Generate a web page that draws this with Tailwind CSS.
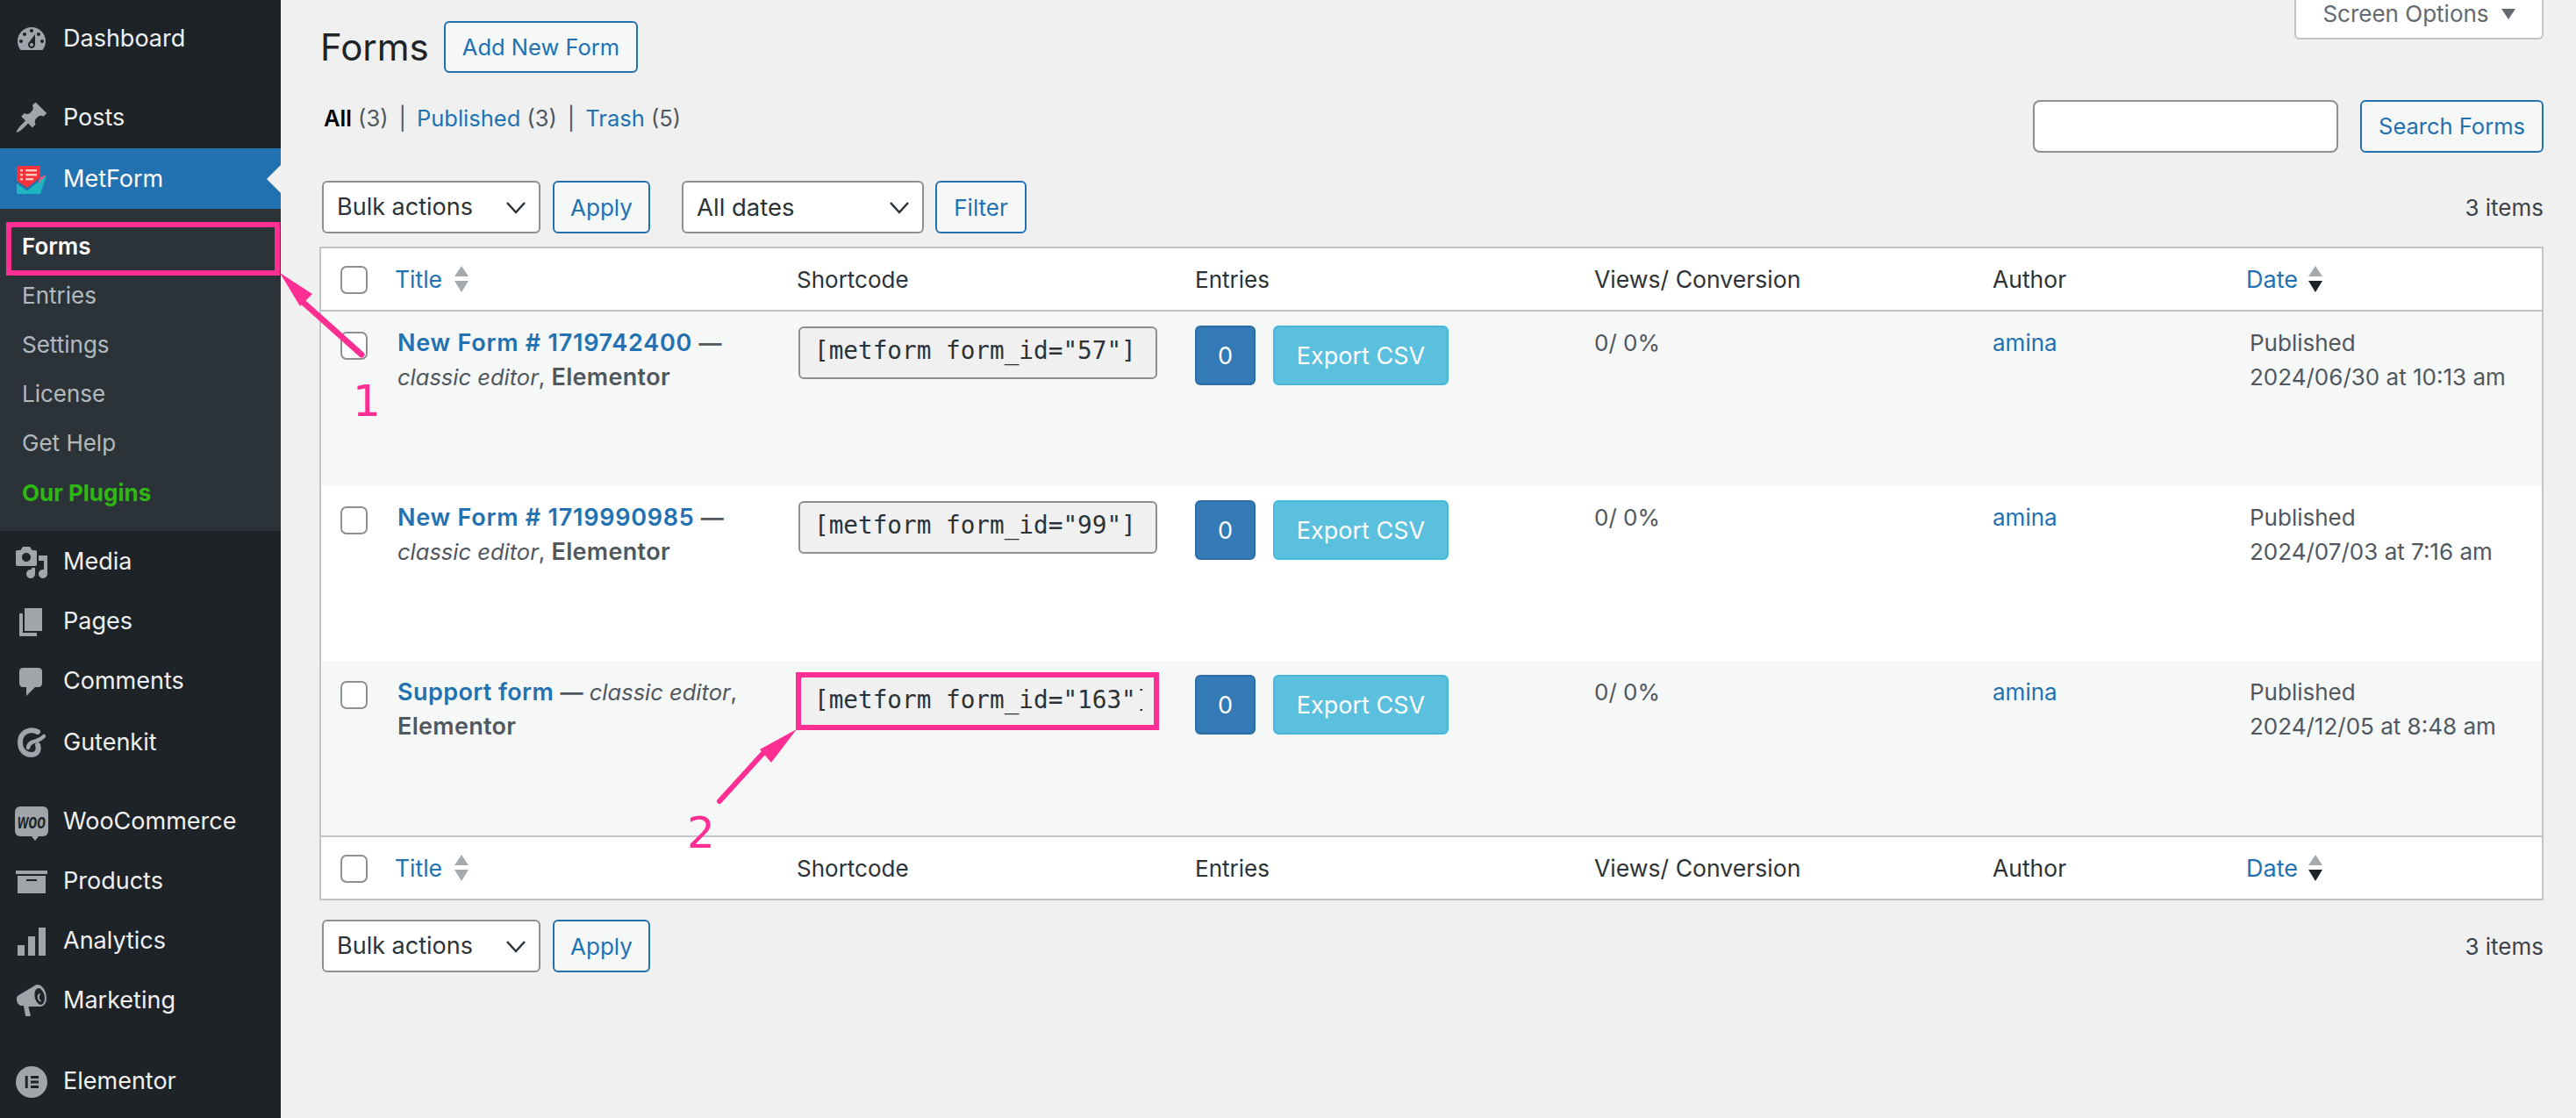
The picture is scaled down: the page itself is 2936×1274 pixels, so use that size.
<!doctype html>
<html>
<head>
<meta charset="utf-8">
<script src="https://cdn.jsdelivr.net/npm/@tailwindcss/browser@4"></script>
</head>
<body class="m-0 overflow-hidden bg-[#f0f0f1] font-['Inter','Liberation_Sans',sans-serif] text-[26px] text-[#3c434a]">
<div class="relative flex h-[1274px] w-[2936px] overflow-hidden">
  <!-- sidebar -->
  <aside class="h-full w-[320px] shrink-0 bg-[#1d2327] pt-[10px] text-[27px] text-[#f0f0f1]">
    <a class="flex h-[68px] items-center pt-[1px]"><span class="flex w-[72px] justify-center"><svg class="h-[40px] w-[40px]" viewBox="0 0 20 20" fill="#a0a5aa"><path fill-rule="evenodd" d="M3.76 16h12.48c1.1-1.37 1.76-3.11 1.76-5 0-4.42-3.58-8-8-8s-8 3.58-8 8c0 1.89.66 3.63 1.76 5zM10 4c.55 0 1 .45 1 1s-.45 1-1 1-1-.45-1-1 .45-1 1-1zM6 6c.55 0 1 .45 1 1s-.45 1-1 1-1-.45-1-1 .45-1 1-1zm8 0c.55 0 1 .45 1 1s-.45 1-1 1-1-.45-1-1 .45-1 1-1zm-5.37 5.55L12 7v6c0 1.1-.9 2-2 2s-2-.9-2-2c0-.57.24-1.08.63-1.45zM4 10c.55 0 1 .45 1 1s-.45 1-1 1-1-.45-1-1 .45-1 1-1zm12 0c.55 0 1 .45 1 1s-.45 1-1 1-1-.45-1-1 .45-1 1-1zm-5 3c0-.55-.45-1-1-1s-1 .45-1 1 .45 1 1 1 1-.45 1-1z"/></svg></span>Dashboard</a>
    <a class="mt-[21px] flex h-[70px] items-center"><span class="flex w-[72px] justify-center"><svg class="h-[40px] w-[40px]" viewBox="0 0 20 20" fill="#a0a5aa"><path d="M10.44 3.02l1.82-1.82 6.36 6.35-1.83 1.82c-1.05-.68-2.48-.57-3.41.36l-.75.75c-.92.93-1.04 2.35-.35 3.41l-1.83 1.82-2.41-2.41-2.8 2.79c-.42.42-3.38 2.71-3.8 2.29s1.86-3.39 2.28-3.81l2.79-2.79L4.1 9.36l1.83-1.82c1.05.69 2.48.57 3.4-.36l.75-.75c.93-.92 1.05-2.35.36-3.41z"/></svg></span>Posts</a>
    <a class="relative flex h-[69px] items-center bg-[#2271b1] pt-[2px] text-white"><span class="flex w-[72px] justify-center"><svg class="h-[32px] w-[34px]" viewBox="0 0 34 32"><path d="M0 20 L12 28 L34 11 L27 32 H0 Z" fill="#1fb5c0"/><path d="M1 0 H27 V13 L12 25 L0 17 V1 Z" fill="#f4333a"/><path d="M27 13 L34 10 L24 21 Z" fill="#ef5a7a"/><g fill="#fbc9c0"><rect x="4" y="4" width="3" height="2.4"/><rect x="4" y="9" width="3" height="2.4"/><rect x="4" y="14" width="3" height="2.4"/><rect x="10" y="4" width="13" height="2.4"/><rect x="10" y="9" width="13" height="2.4"/><rect x="10" y="14" width="9" height="2.4"/></g></svg></span>MetForm<span class="absolute right-0 top-1/2 h-0 w-0 -translate-y-1/2 border-y-[16px] border-r-[16px] border-y-transparent border-r-[#f0f0f1]"></span></a>
    <ul class="relative h-[367px] bg-[#2c3338] pt-[14px] pl-[25px] text-[26px] text-[rgba(240,246,252,0.7)]">
      <li class="flex h-[56.2px] items-center font-semibold text-white">Forms</li>
      <li class="flex h-[56.2px] items-center">Entries</li>
      <li class="flex h-[56.2px] items-center">Settings</li>
      <li class="flex h-[56.2px] items-center">License</li>
      <li class="flex h-[56.2px] items-center">Get Help</li>
      <li class="flex h-[56.2px] items-center font-bold text-[#2fb813]">Our Plugins</li>
      <li class="absolute left-[7px] top-[15px] h-[61px] w-[312px] border-[6px] border-[#fe2e92]"></li>
    </ul>
    <a class="flex h-[68px] items-center pt-[3px]"><span class="flex w-[72px] justify-center"><svg class="h-[40px] w-[40px]" viewBox="0 0 20 20" fill="#a0a5aa"><path fill-rule="evenodd" d="M13 11V4c0-.55-.45-1-1-1h-1.67L9 1H5L3.67 3H2c-.55 0-1 .45-1 1v7c0 .55.45 1 1 1h10c.55 0 1-.45 1-1zM7 4.5c1.38 0 2.5 1.12 2.5 2.5S8.38 9.5 7 9.5 4.5 8.38 4.5 7 5.62 4.5 7 4.5zM14 6h5v10.5c0 1.38-1.12 2.5-2.5 2.5S14 17.88 14 16.5s1.12-2.5 2.5-2.5c.17 0 .34.02.5.05V9h-3V6zm-4 8.05V13h2v3.5c0 1.38-1.12 2.5-2.5 2.5S7 17.88 7 16.5 8.12 14 9.5 14c.17 0 .34.02.5.05z"/></svg></span>Media</a>
    <a class="flex h-[68px] items-center pt-[3px]"><span class="flex w-[72px] justify-center"><svg class="h-[40px] w-[40px]" viewBox="0 0 20 20" fill="#a0a5aa"><path d="M6 15V2h10v13H6zm-1 1h8v2H3V5h2v11z"/></svg></span>Pages</a>
    <a class="flex h-[68px] items-center pt-[3px]"><span class="flex w-[72px] justify-center"><svg class="h-[40px] w-[40px]" viewBox="0 0 20 20" fill="#a0a5aa"><path d="M5 2h9c1.1 0 2 .9 2 2v7c0 1.1-.9 2-2 2h-2l-5 5v-5H5c-1.1 0-2-.9-2-2V4c0-1.1.9-2 2-2z"/></svg></span>Comments</a>
    <a class="mt-[2px] flex h-[68px] items-center pt-[2px]"><span class="flex w-[72px] justify-center"><svg class="h-[34px] w-[32px]" viewBox="0 0 32 34" fill="none" stroke="#a0a5aa" stroke-linecap="round"><path stroke-width="6" d="M23 5 C15 1 3 4 3 17 C3 28 11 31 16 31 C22 31 25 26 23 20"/><path stroke-width="4.5" d="M12 23 C13 17 18 16 22 15 C25 14 27 13 30 10"/></svg></span>Gutenkit</a>
    <a class="mt-[22px] flex h-[68px] items-center pt-[2px]"><span class="flex w-[72px] justify-center"><span class="relative flex h-[34px] w-[38px] items-center justify-center rounded-[6px] bg-[#a0a5aa] font-['Liberation_Sans',sans-serif] text-[16px] font-bold italic leading-none text-[#1d2327]"><span class="scale-y-150">woo</span><span class="absolute -bottom-[5px] left-[19px] h-0 w-0 border-x-[4px] border-t-[5px] border-x-transparent border-t-[#a0a5aa]"></span></span></span>WooCommerce</a>
    <a class="flex h-[68px] items-center pt-[2px]"><span class="flex w-[72px] justify-center"><svg class="h-[40px] w-[40px]" viewBox="0 0 20 20" fill="#a0a5aa"><path fill-rule="evenodd" d="M19 4v2H1V4h18zM2 7h16v10H2V7zm11 3V9H7v1h6z"/></svg></span>Products</a>
    <a class="flex h-[68px] items-center pt-[3px]"><span class="flex w-[72px] justify-center"><svg class="h-[40px] w-[40px]" viewBox="0 0 20 20" fill="#a0a5aa"><path d="M18 18V2h-4v16h4zm-6 0V7H8v11h4zm-6 0v-6H2v6h4z"/></svg></span>Analytics</a>
    <a class="flex h-[68px] items-center pt-[3px]"><span class="flex w-[72px] justify-center"><svg class="h-[40px] w-[40px]" viewBox="0 0 20 20" fill="#a0a5aa"><path fill-rule="evenodd" d="M18.15 5.94c.46 1.62.38 3.22-.02 4.48-.42 1.28-1.26 2.18-2.3 2.48-.16.06-.26.06-.4.06-.06.02-.12.02-.18.02-.06.02-.14.02-.22.02H8.2l1.2 5c.02.14-.06.26-.14.34-.08.1-.24.16-.34.16H6.95c-.1 0-.26-.06-.34-.16-.08-.08-.16-.2-.14-.34l-1-5.5H4.25c-.5.06-1.08-.18-1.54-.62s-.88-1.08-1.06-1.88c-.24-.8-.2-1.56-.02-2.2.18-.62.58-1.08 1.06-1.3l9-5.42c.1-.06.18-.1.24-.16.06-.04.14-.08.24-.12.16-.08.28-.12.5-.18 1.04-.3 2.24.1 3.22 1 .98.88 1.8 2.24 2.26 3.86zm-2.6 5.98c.4-.1.74-.34 1.04-.7.58-.7.86-1.76.86-3.04-.02-.64-.12-1.3-.3-2-.2-.68-.46-1.32-.78-1.84-.34-.56-.74-1-1.18-1.32-.44-.3-.86-.46-1.26-.46-.12 0-.22.02-.32.04-.4.12-.74.34-1.04.7-.6.7-.88 1.76-.86 3.04 0 .64.1 1.3.3 2 .18.68.46 1.32.78 1.84.34.56.74 1 1.18 1.32.44.3.86.46 1.26.46.12 0 .22-.02.34-.04zm-.84-2.86c-.3-.58-.4-1.26-.24-1.9.16-.66.4-1.16.74-1.42-.26-.1-.54-.14-.82-.1-.86.24-1.28 1.42-.92 2.68.36 1.26 1.32 2.06 2.18 1.82l.06-.02c-.3-.22-.62-.58-.82-1.06z"/></svg></span>Marketing</a>
    <a class="mt-[24px] flex h-[68px] items-center pt-[3px]"><span class="flex w-[72px] justify-center"><svg class="h-[36px] w-[36px]" viewBox="0 0 36 36"><circle cx="18" cy="18" r="18" fill="#a0a5aa"/><g fill="#1d2327"><rect x="10.7" y="11" width="3" height="14"/><rect x="17" y="11" width="9" height="3"/><rect x="17" y="16.5" width="9" height="3"/><rect x="17" y="22" width="9" height="3"/></g></svg></span>Elementor</a>
  </aside>

  <!-- main -->
  <main class="w-[2616px] pl-[44px] pr-[37px]">
    <header class="flex h-[83px] items-start justify-between">
      <div class="flex items-start pt-[24px]">
        <h1 class="ml-[1px] w-[141px] text-[42px] font-normal leading-[59px] text-[#1d2327]">Forms</h1>
        <button class="h-[59px] w-[221px] rounded-[6px] border-2 border-[#2271b1] bg-[#f6f7f7] pt-[2px] text-[25.5px] text-[#2271b1]">Add New Form</button>
      </div>
      <div class="flex h-[45px] w-[284px] items-center justify-center gap-[14px] rounded-b-[6px] border-2 border-t-0 border-[#c3c4c7] bg-white pb-[12px] text-[#646970]">Screen Options<span class="h-0 w-0 border-x-[8px] border-t-[12px] border-x-transparent border-t-[#646970]"></span></div>
    </header>

    <div class="mt-[31px] flex h-[60px] items-start justify-between">
      <div class="ml-[5px] flex gap-[12px] text-[25.5px] leading-[42px] text-[#50575e]">
        <span><b class="font-semibold text-black">All</b> (3)</span><span>|</span>
        <span><a class="text-[#2271b1]">Published</a> (3)</span><span>|</span>
        <span><a class="text-[#2271b1]">Trash</a> (5)</span>
      </div>
      <div class="flex gap-[25px]">
        <input class="h-[60px] w-[348px] rounded-[8px] border-2 border-[#8c8f94] bg-white" aria-label="Search">
        <button class="h-[60px] w-[209px] rounded-[6px] border-2 border-[#2271b1] bg-[#f6f7f7] pt-[1px] text-[25.5px] text-[#2271b1]">Search Forms</button>
      </div>
    </div>

    <div class="mt-[32px] flex h-[60px] items-center justify-between">
      <div class="ml-[3px] flex">
        <button class="flex h-[60px] w-[249px] items-center justify-between rounded-[6px] border-2 border-[#8c8f94] bg-white pl-[15px] pr-[15px] pt-[1px] text-[27px] text-[#2c3338]">Bulk actions<svg class="h-[14px] w-[22px]" viewBox="0 0 22 14" fill="none" stroke="#2c3338" stroke-width="2.5"><path d="M1 1l10 11L21 1"/></svg></button>
        <button class="ml-[14px] h-[60px] w-[111px] rounded-[6px] border-2 border-[#2271b1] bg-[#f6f7f7] text-[#2271b1]">Apply</button>
        <button class="ml-[36px] flex h-[60px] w-[276px] items-center justify-between rounded-[6px] border-2 border-[#8c8f94] bg-white pl-[15px] pr-[15px] pt-[1px] text-[27.5px] text-[#2c3338]">All dates<svg class="h-[14px] w-[22px]" viewBox="0 0 22 14" fill="none" stroke="#2c3338" stroke-width="2.5"><path d="M1 1l10 11L21 1"/></svg></button>
        <button class="ml-[13px] h-[60px] w-[104px] rounded-[6px] border-2 border-[#2271b1] bg-[#f6f7f7] text-[#2271b1]">Filter</button>
      </div>
      <span class="text-[#3c434a]">3 items</span>
    </div>

    <div class="mt-[15px] w-[2535px] border-2 border-[#c3c4c7] bg-white">
      <table class="w-full table-fixed border-separate border-spacing-0 text-left leading-[39px]">
        <colgroup><col class="w-[64px]"><col class="w-[459px]"><col class="w-[454px]"><col class="w-[454px]"><col class="w-[454px]"><col class="w-[290px]"><col></colgroup>
        <thead>
          <tr class="h-[72px] text-[#2c3338]">
            <th class="border-b-2 border-[#c3c4c7] pl-[22px] font-normal"><input type="checkbox" class="mt-[2px] block h-[32px] w-[31px] appearance-none rounded-[7px] border-2 border-[#8c8f94] bg-white" aria-label="Select all"></th>
            <th class="border-b-2 border-[#c3c4c7] pl-[20px] font-normal"><span class="flex items-center gap-[14px] text-[26.5px] text-[#2271b1]">Title<svg class="h-[30px] w-[16px]" viewBox="0 0 16 30"><path d="M8 0l8 12H0z" fill="#a7aaad"/><path d="M8 30L0 17h16z" fill="#a7aaad"/></svg></span></th>
            <th class="border-b-2 border-[#c3c4c7] pl-[19px] font-normal">Shortcode</th>
            <th class="border-b-2 border-[#c3c4c7] pl-[19px] font-normal">Entries</th>
            <th class="border-b-2 border-[#c3c4c7] pl-[20px] text-[26.6px] font-normal">Views/ Conversion</th>
            <th class="border-b-2 border-[#c3c4c7] pl-[20px] text-[26.5px] font-normal">Author</th>
            <th class="border-b-2 border-[#c3c4c7] pl-[19px] font-normal"><span class="flex items-center gap-[12px] text-[27px] text-[#2271b1]">Date<svg class="h-[30px] w-[16px]" viewBox="0 0 16 30"><path d="M8 0l8 12H0z" fill="#a7aaad"/><path d="M8 30L0 17h16z" fill="#1d2327"/></svg></span></th>
          </tr>
        </thead>
        <tbody class="text-[#50575e]">
          <tr class="h-[199px] bg-[#f6f7f7] align-top">
            <td class="pl-[22px] pt-[23px]"><input type="checkbox" class="block h-[32px] w-[31px] appearance-none rounded-[7px] border-2 border-[#8c8f94] bg-white" aria-label="Select"></td>
            <td class="pl-[23px] pt-[16px]"><a class="text-[27px] font-semibold tracking-[0.75px] text-[#2271b1]">New Form # 1719742400</a> <b class="font-semibold">—</b><br><i class="text-[25.5px]">classic editor</i>, <b class="text-[27px] font-semibold tracking-[0.3px]">Elementor</b></td>
            <td class="pl-[21px] pt-[17px]"><div class="h-[60px] w-[409px] rounded-[6px] border-2 border-[#8c8f94] bg-[#f0f0f1] px-[16px] font-['DejaVu_Sans_Mono',monospace] text-[27.7px] leading-[52px] text-[#2c3338]"><div class="w-[374px] overflow-hidden whitespace-nowrap">[metform form_id="57"]</div></div></td>
            <td class="pl-[19px] pt-[16px]"><div class="flex gap-[20px]"><button class="h-[68px] w-[69px] rounded-[6px] border-2 border-[#2e6da4] bg-[#337ab7] text-[27px] text-white">0</button><button class="h-[68px] w-[200px] rounded-[6px] border-2 border-[#46b8da] bg-[#5bc0de] text-[27px] text-white">Export CSV</button></div></td>
            <td class="pl-[20px] pt-[16px]">0/ 0%</td>
            <td class="pl-[20px] pt-[16px]"><a class="text-[#2271b1]">amina</a></td>
            <td class="pl-[23px] pt-[16px]">Published<br>2024/06/30 at 10:13 am</td>
          </tr>
          <tr class="h-[199px] bg-white align-top">
            <td class="pl-[22px] pt-[23px]"><input type="checkbox" class="block h-[32px] w-[31px] appearance-none rounded-[7px] border-2 border-[#8c8f94] bg-white" aria-label="Select"></td>
            <td class="pl-[23px] pt-[16px]"><a class="text-[27px] font-semibold tracking-[0.75px] text-[#2271b1]">New Form # 1719990985</a> <b class="font-semibold">—</b><br><i class="text-[25.5px]">classic editor</i>, <b class="text-[27px] font-semibold tracking-[0.3px]">Elementor</b></td>
            <td class="pl-[21px] pt-[17px]"><div class="h-[60px] w-[409px] rounded-[6px] border-2 border-[#8c8f94] bg-[#f0f0f1] px-[16px] font-['DejaVu_Sans_Mono',monospace] text-[27.7px] leading-[52px] text-[#2c3338]"><div class="w-[374px] overflow-hidden whitespace-nowrap">[metform form_id="99"]</div></div></td>
            <td class="pl-[19px] pt-[16px]"><div class="flex gap-[20px]"><button class="h-[68px] w-[69px] rounded-[6px] border-2 border-[#2e6da4] bg-[#337ab7] text-[27px] text-white">0</button><button class="h-[68px] w-[200px] rounded-[6px] border-2 border-[#46b8da] bg-[#5bc0de] text-[27px] text-white">Export CSV</button></div></td>
            <td class="pl-[20px] pt-[16px]">0/ 0%</td>
            <td class="pl-[20px] pt-[16px]"><a class="text-[#2271b1]">amina</a></td>
            <td class="pl-[23px] pt-[16px]">Published<br>2024/07/03 at 7:16 am</td>
          </tr>
          <tr class="h-[199px] bg-[#f6f7f7] align-top">
            <td class="pl-[22px] pt-[23px]"><input type="checkbox" class="block h-[32px] w-[31px] appearance-none rounded-[7px] border-2 border-[#8c8f94] bg-white" aria-label="Select"></td>
            <td class="pl-[23px] pt-[16px]"><a class="text-[27px] font-semibold tracking-[0.4px] text-[#2271b1]">Support form</a> <b class="font-semibold">—</b> <i class="text-[25.5px]">classic editor</i>,<br><b class="text-[27px] font-semibold tracking-[0.3px]">Elementor</b></td>
            <td class="pl-[21px] pt-[17px]"><div class="relative h-[60px] w-[409px] rounded-[6px] border-2 border-[#8c8f94] bg-[#f0f0f1] px-[16px] font-['DejaVu_Sans_Mono',monospace] text-[27.7px] leading-[52px] text-[#2c3338]"><div class="w-[374px] overflow-hidden whitespace-nowrap">[metform form_id="163"]</div><span class="absolute -left-[5px] -top-[6px] h-[66px] w-[414px] border-[6px] border-[#fe2e92]"></span></div></td>
            <td class="pl-[19px] pt-[16px]"><div class="flex gap-[20px]"><button class="h-[68px] w-[69px] rounded-[6px] border-2 border-[#2e6da4] bg-[#337ab7] text-[27px] text-white">0</button><button class="h-[68px] w-[200px] rounded-[6px] border-2 border-[#46b8da] bg-[#5bc0de] text-[27px] text-white">Export CSV</button></div></td>
            <td class="pl-[20px] pt-[16px]">0/ 0%</td>
            <td class="pl-[20px] pt-[16px]"><a class="text-[#2271b1]">amina</a></td>
            <td class="pl-[23px] pt-[16px]">Published<br>2024/12/05 at 8:48 am</td>
          </tr>
        </tbody>
        <tfoot>
          <tr class="h-[72px] text-[#2c3338]">
            <th class="border-t-2 border-[#c3c4c7] pl-[22px] font-normal"><input type="checkbox" class="mt-[2px] block h-[32px] w-[31px] appearance-none rounded-[7px] border-2 border-[#8c8f94] bg-white" aria-label="Select all"></th>
            <th class="border-t-2 border-[#c3c4c7] pl-[20px] font-normal"><span class="flex items-center gap-[14px] text-[26.5px] text-[#2271b1]">Title<svg class="h-[30px] w-[16px]" viewBox="0 0 16 30"><path d="M8 0l8 12H0z" fill="#a7aaad"/><path d="M8 30L0 17h16z" fill="#a7aaad"/></svg></span></th>
            <th class="border-t-2 border-[#c3c4c7] pl-[19px] font-normal">Shortcode</th>
            <th class="border-t-2 border-[#c3c4c7] pl-[19px] font-normal">Entries</th>
            <th class="border-t-2 border-[#c3c4c7] pl-[20px] text-[26.6px] font-normal">Views/ Conversion</th>
            <th class="border-t-2 border-[#c3c4c7] pl-[20px] text-[26.5px] font-normal">Author</th>
            <th class="border-t-2 border-[#c3c4c7] pl-[19px] font-normal"><span class="flex items-center gap-[12px] text-[27px] text-[#2271b1]">Date<svg class="h-[30px] w-[16px]" viewBox="0 0 16 30"><path d="M8 0l8 12H0z" fill="#a7aaad"/><path d="M8 30L0 17h16z" fill="#1d2327"/></svg></span></th>
          </tr>
        </tfoot>
      </table>
    </div>

    <div class="mt-[22px] flex h-[60px] items-center justify-between">
      <div class="ml-[3px] flex">
        <button class="flex h-[60px] w-[249px] items-center justify-between rounded-[6px] border-2 border-[#8c8f94] bg-white pl-[15px] pr-[15px] pt-[1px] text-[27px] text-[#2c3338]">Bulk actions<svg class="h-[14px] w-[22px]" viewBox="0 0 22 14" fill="none" stroke="#2c3338" stroke-width="2.5"><path d="M1 1l10 11L21 1"/></svg></button>
        <button class="ml-[14px] h-[60px] w-[111px] rounded-[6px] border-2 border-[#2271b1] bg-[#f6f7f7] text-[#2271b1]">Apply</button>
      </div>
      <span class="text-[#3c434a]">3 items</span>
    </div>
  </main>

  <!-- annotations laid over the page -->
  <svg class="pointer-events-none absolute left-0 top-0 h-[1274px] w-[2936px]" viewBox="0 0 2936 1274" fill="#fe2e92" stroke="none">
    <path d="M412 404 L345 344" stroke="#fe2e92" stroke-width="7" stroke-linecap="round"/>
    <path d="M319 311 L356 335 L342 349 Z"/>
    <path d="M820 913 L870 858" stroke="#fe2e92" stroke-width="6" stroke-linecap="round"/>
    <path d="M908 831 L866 854 L879 869 Z"/>
  </svg>
  <span class="absolute left-[402px] top-[427px] font-['DejaVu_Sans',sans-serif] text-[50px] leading-[60px] text-[#fe2e92]">1</span>
  <span class="absolute left-[783px] top-[919px] font-['DejaVu_Sans',sans-serif] text-[50px] leading-[60px] text-[#fe2e92]">2</span>
</div>
</body>
</html>
